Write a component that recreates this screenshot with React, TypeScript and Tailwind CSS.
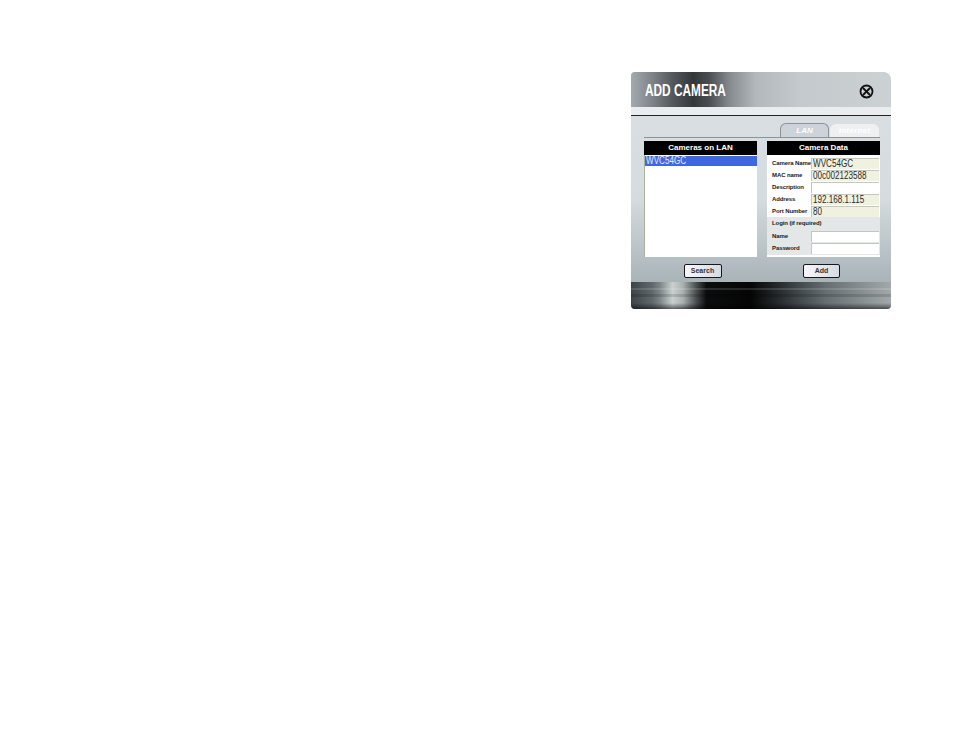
const rows = [
  { label: 'Camera Name', value: 'WVC54GC', fill: 'bg-[#f1f1df]' },
  { label: 'MAC name', value: '00c002123588', fill: 'bg-[#f1f1df]' },
  { label: 'Description', value: '', fill: 'bg-white' },
  { label: 'Address', value: '192.168.1.115', fill: 'bg-[#f1f1df]' },
  { label: 'Port Number', value: '80', fill: 'bg-[#f1f1df]' },
];

function Field({ label, value, fill }: { label: string; value: string; fill: string }) {
  return (
    <div className="flex h-3 items-center">
      <span className="w-[44px] shrink-0 whitespace-nowrap pl-[5px] text-[6px] font-bold tracking-[-0.1px] text-[#1a1a1a]">
        {label}
      </span>
      <span
        className={
          'flex h-[11px] w-[68px] items-center border-t border-l border-[#c3c6bc] pl-px text-[10px] leading-none text-[#2a2a2a] ' +
          fill
        }
      >
        <span className="inline-block origin-left scale-x-[0.81] whitespace-nowrap">{value}</span>
      </span>
    </div>
  );
}

function DialogButton({ label, className }: { label: string; className: string }) {
  return (
    <button
      className={
        'flex h-[14px] items-center justify-center rounded-[2px] border border-[#15181c] bg-gradient-to-r from-[#f8f6fb] to-[#d5dbe4] text-[7px] font-bold text-[#333] ' +
        className
      }
    >
      {label}
    </button>
  );
}

export default function App() {
  return (
    <div className="h-[738px] w-[954px] overflow-hidden bg-white pt-[72px] pl-[631px] font-['Liberation_Sans',sans-serif]">
      <div className="flex h-[237px] w-[260px] flex-col overflow-hidden rounded-tl-[4px] rounded-tr-[8px] rounded-br-[4px] rounded-bl-[4px] bg-[#cfd6db]">
        {/* Header */}
        <div className="flex h-[35px] shrink-0 items-center justify-between bg-[linear-gradient(90deg,#a4abb0_0%,#7e8489_8%,#54585c_16%,#34373a_24%,#4a4e52_30%,#858b8f_38%,#b2b8bb_48%,#c3c9cc_65%,#ccd2d4_100%)] pt-[3px] pr-[16px] pl-[14px]">
          <span className="inline-block origin-left scale-x-[0.74] text-[16px] leading-none font-bold whitespace-nowrap text-white">
            ADD CAMERA
          </span>
          <svg width="15" height="15" viewBox="0 0 15 15" fill="none" stroke="#111" className="mr-px">
            <circle cx="7.5" cy="7.5" r="6" strokeWidth="1.8" />
            <path d="M4 4l7 7M11 4l-7 7" strokeWidth="1.8" />
          </svg>
        </div>
        <div className="h-2 shrink-0 bg-[#e9edef]" />

        {/* Body */}
        <div className="flex h-[167px] shrink-0 flex-col border-t border-[#222] bg-gradient-to-b from-[#d9dee2] via-[#d5dbdf] to-[#a9b4b8] pr-[11px] pl-[13px]">
          {/* Tabs */}
          <div className="flex h-[22px] shrink-0 items-end justify-end gap-px border-b border-[#8b9298] pr-px">
            <div className="flex h-[14px] w-[49px] items-center justify-center rounded-t-[6px] border border-b-0 border-[#8b9298] bg-[#cdd3d8] text-[8px] font-bold italic text-white">
              LAN
            </div>
            <div className="flex h-[13px] w-[49px] items-center justify-center rounded-t-[6px] bg-[#eef0f2] text-[8px] font-bold italic tracking-[0.3px] text-white">
              Internet
            </div>
          </div>

          <div className="mt-[3px] flex gap-[10px]">
            {/* Cameras list */}
            <div className="flex w-[113px] flex-col">
              <div className="flex h-[14px] items-center justify-center bg-black text-[8px] font-bold text-white">
                Cameras on LAN
              </div>
              <div className="h-[102px] border-l border-[#a9b39a] bg-white pt-px">
                <div className="flex h-[10px] items-center bg-[#3f67e0] pl-px text-[10px] leading-none text-[#e8ecff]">
                  <span className="inline-block origin-left scale-x-[0.81] whitespace-nowrap">WVC54GC</span>
                </div>
              </div>
              <div className="mt-[7px] flex justify-center">
                <DialogButton label="Search" className="ml-[4px] w-[38px]" />
              </div>
            </div>

            {/* Camera data */}
            <div className="flex w-[113px] flex-col">
              <div className="flex h-[14px] items-center justify-center bg-black text-[8px] font-bold text-white">
                Camera Data
              </div>
              <div className="h-[102px] bg-white pt-[2px]">
                {rows.map((row) => (
                  <Field key={row.label} label={row.label} value={row.value} fill={row.fill} />
                ))}
                <div className="flex h-[13px] items-center bg-[#e4e7e7] pl-[5px] text-[6px] font-bold tracking-[-0.1px] text-[#1a1a1a]">
                  Login (if required)
                </div>
                <div className="bg-[#e4e7e7]">
                  <Field label="Name" value="" fill="bg-white" />
                  <Field label="Password" value="" fill="bg-white" />
                  <div className="h-px" />
                </div>
              </div>
              <div className="mt-[7px] flex justify-center">
                <DialogButton label="Add" className="mr-[4px] w-[37px]" />
              </div>
            </div>
          </div>
        </div>

        {/* Footer */}
        <div className="relative flex-1 bg-[linear-gradient(90deg,#3c4449_0%,#5f676b_8%,#7b8386_11%,#c9d0ce_16%,#a9b0b0_20%,#4a4f50_25%,#0b0c0d_29%,#050505_46%,#2a2f32_58%,#666e71_75%,#a3a9ab_100%)]">
          <div className="absolute inset-x-0 top-[6px] h-[2px] bg-[#ffffff22]" />
          <div className="absolute inset-x-0 top-[12px] h-[3px] bg-[#00000022]" />
          <div className="absolute inset-x-0 bottom-0 h-[6px] bg-gradient-to-b from-[#00000000] to-[#00000088]" />
        </div>
      </div>
    </div>
  );
}
